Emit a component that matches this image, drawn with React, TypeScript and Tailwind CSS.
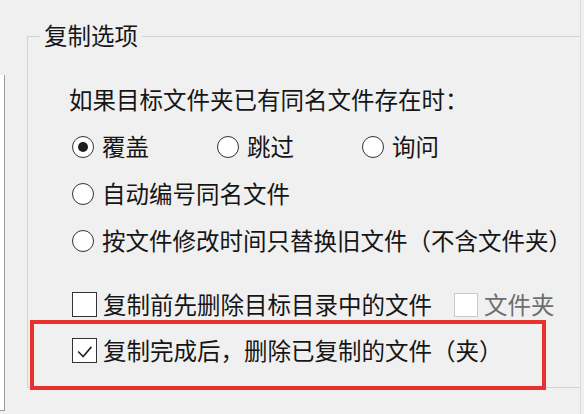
import React from "react";

function Radio({ checked, label, wide }: { checked?: boolean; label: string; wide?: boolean }) {
  return (
    <label className={wide ? "flex w-[145px] items-center whitespace-nowrap" : "flex items-center whitespace-nowrap"}>
      <span className="flex h-[22px] w-[22px] shrink-0 items-center justify-center rounded-full border-[1.5px] border-[#333] bg-white">
        {checked ? <span className="h-[10px] w-[10px] rounded-full bg-[#1f1f1f]" /> : null}
      </span>
      <span className="ml-[8px]">{label}</span>
    </label>
  );
}

function Checkbox({ checked, disabled }: { checked?: boolean; disabled?: boolean }) {
  return (
    <span
      className={
        disabled
          ? "flex h-[24px] w-[24px] shrink-0 items-center justify-center border-[1.5px] border-[#c9c9c9] bg-white"
          : "flex h-[25px] w-[25px] shrink-0 items-center justify-center border-[1.8px] border-[#333] bg-white"
      }
    >
      {checked ? (
        <svg viewBox="0 0 24 24" className="h-[22px] w-[22px]" aria-hidden>
          <path d="M4.5 12.5 L10 18 L19 7.5" fill="none" stroke="#222" strokeWidth="1.7" />
        </svg>
      ) : null}
    </span>
  );
}

export default function App() {
  return (
    <div className="h-[414px] w-[584px] overflow-hidden bg-[#f0f0f0] font-['Noto_Sans_CJK_SC',sans-serif] text-[23.5px] leading-none text-[#161616]">
      <div className="flex h-full w-[581px] items-start border-r border-[#dadada]">
        <div className="mt-[75px] h-[336px] w-[5px] border-r border-b border-[#9c9c9c] bg-white" />

        <fieldset className="relative ml-[22px] mt-[36px] h-[352px] w-[553px] border-t border-l border-b border-[#d3d3d3]">
          <span className="absolute left-[12px] top-[-13.5px] bg-[#f0f0f0] px-[4px]">复制选项</span>

          <div className="flex flex-col pl-[41px] pt-[39px]">
            <div className="flex h-[47px] items-center whitespace-nowrap">如果目标文件夹已有同名文件存在时：</div>

            <div className="ml-[3px] flex h-[47px] items-center">
              <Radio checked wide label="覆盖" />
              <Radio wide label="跳过" />
              <Radio wide label="询问" />
            </div>

            <div className="ml-[3px] flex h-[47px] items-center">
              <Radio label="自动编号同名文件" />
            </div>

            <div className="ml-[3px] flex h-[47px] items-center">
              <Radio label="按文件修改时间只替换旧文件（不含文件夹）" />
            </div>

            <div className="ml-[3px] mt-[17px] flex h-[47px] items-center whitespace-nowrap">
              <Checkbox />
              <span className="ml-[6px]">复制前先删除目标目录中的文件</span>
              <span className="ml-[22px]">
                <Checkbox disabled />
              </span>
              <span className="ml-[6px] text-[#6e6e6e]">文件夹</span>
            </div>

            <div className="relative z-10 ml-[-39px] mt-[-8px] flex h-[70px] w-[516px] items-start border-4 border-[#e8302c] bg-[#f0f0f0] pl-[38px] pt-[14px]">
              <div className="flex h-[25px] items-center whitespace-nowrap">
                <Checkbox checked />
                <span className="ml-[6px]">复制完成后，删除已复制的文件（夹）</span>
              </div>
            </div>
          </div>
        </fieldset>
      </div>
    </div>
  );
}
